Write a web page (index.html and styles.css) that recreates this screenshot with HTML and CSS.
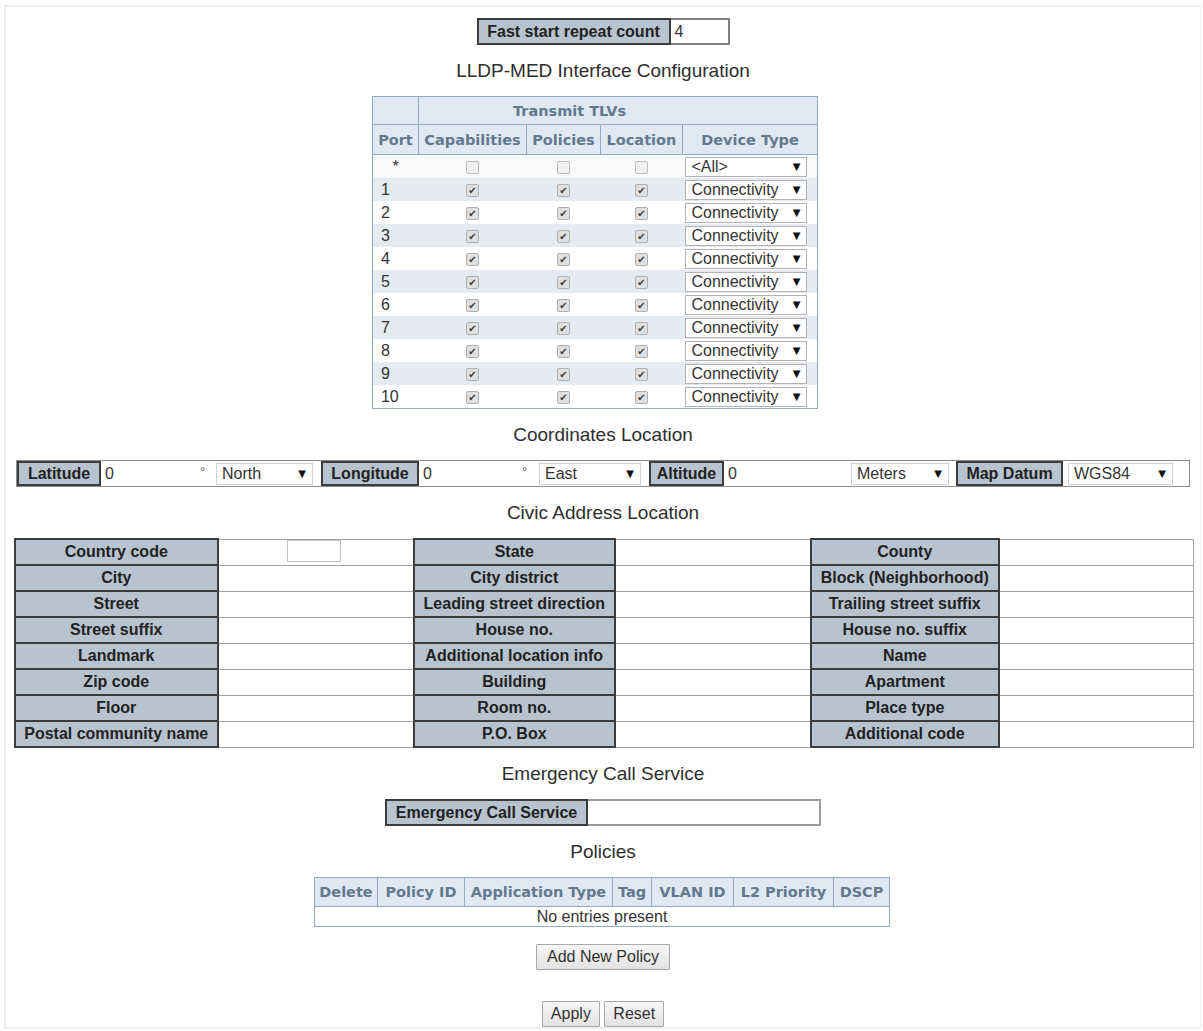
FILE: index.html
```html
<!DOCTYPE html>
<html lang="en">
<head>
    <meta charset="UTF-8">
    <title>LLDP-MED Configuration</title>
    <link rel="stylesheet" href="styles.css">
</head>
<body>
<div class="page">

    <table class="pair fast">
        <tr>
            <td class="lbl">Fast start repeat count</td>
            <td class="val"><span class="txt">4</span></td>
        </tr>
    </table>

    <h2 class="title">LLDP-MED Interface Configuration</h2>

    <table class="grid med">
        <colgroup>
            <col style="width:46px"><col style="width:108px"><col style="width:74px"><col style="width:82px"><col style="width:135px">
        </colgroup>
        <tr class="h1">
            <th></th>
            <th colspan="4" class="tlv">Transmit TLVs</th>
        </tr>
        <tr class="h2">
            <th>Port</th>
            <th>Capabilities</th>
            <th>Policies</th>
            <th>Location</th>
            <th>Device Type</th>
        </tr>
        <tr class="all">
            <td class="port c">*</td>
            <td class="c"><span class="cb"></span></td>
            <td class="c"><span class="cb"></span></td>
            <td class="c"><span class="cb"></span></td>
            <td><span class="sel">&lt;All&gt;<i>▼</i></span></td>
        </tr>
    </table>

    <h2 class="title">Coordinates Location</h2>

    <div class="coord">
        <div class="clbl w84">Latitude</div>
        <div class="cin w95">0</div>
        <div class="deg w20">°</div>
        <div class="sel csel w97 gap">North<i>▼</i></div>
        <div class="clbl w98">Longitude</div>
        <div class="cin w99">0</div>
        <div class="deg w21">°</div>
        <div class="sel csel w102 gap">East<i>▼</i></div>
        <div class="clbl w75">Altitude</div>
        <div class="cin w127">0</div>
        <div class="sel csel w98 gap7">Meters<i>▼</i></div>
        <div class="clbl w107 gap">Map Datum</div>
        <div class="sel csel w105 gap5">WGS84<i>▼</i></div>
    </div>

    <h2 class="title">Civic Address Location</h2>

    <table class="civic">
        <colgroup>
            <col style="width:203px"><col style="width:196px"><col style="width:201px"><col style="width:196px"><col style="width:188px"><col style="width:195px">
        </colgroup>
        <tr>
            <td class="lbl">Country code</td>
            <td class="val"><span class="cc"></span></td>
            <td class="lbl">State</td><td class="val"></td>
            <td class="lbl">County</td><td class="val"></td>
        </tr>
        <tr>
            <td class="lbl">City</td><td class="val"></td>
            <td class="lbl">City district</td><td class="val"></td>
            <td class="lbl">Block (Neighborhood)</td><td class="val"></td>
        </tr>
        <tr>
            <td class="lbl">Street</td><td class="val"></td>
            <td class="lbl">Leading street direction</td><td class="val"></td>
            <td class="lbl">Trailing street suffix</td><td class="val"></td>
        </tr>
        <tr>
            <td class="lbl">Street suffix</td><td class="val"></td>
            <td class="lbl">House no.</td><td class="val"></td>
            <td class="lbl">House no. suffix</td><td class="val"></td>
        </tr>
        <tr>
            <td class="lbl">Landmark</td><td class="val"></td>
            <td class="lbl">Additional location info</td><td class="val"></td>
            <td class="lbl">Name</td><td class="val"></td>
        </tr>
        <tr>
            <td class="lbl">Zip code</td><td class="val"></td>
            <td class="lbl">Building</td><td class="val"></td>
            <td class="lbl">Apartment</td><td class="val"></td>
        </tr>
        <tr>
            <td class="lbl">Floor</td><td class="val"></td>
            <td class="lbl">Room no.</td><td class="val"></td>
            <td class="lbl">Place type</td><td class="val"></td>
        </tr>
        <tr>
            <td class="lbl">Postal community name</td><td class="val"></td>
            <td class="lbl">P.O. Box</td><td class="val"></td>
            <td class="lbl">Additional code</td><td class="val"></td>
        </tr>
    </table>

    <h2 class="title">Emergency Call Service</h2>

    <table class="pair ecs">
        <tr>
            <td class="lbl">Emergency Call Service</td>
            <td class="val"></td>
        </tr>
    </table>

    <h2 class="title">Policies</h2>

    <table class="grid pol">
        <colgroup>
            <col style="width:63px"><col style="width:87px"><col style="width:148px"><col style="width:39px"><col style="width:82px"><col style="width:100px"><col style="width:56px">
        </colgroup>
        <tr class="h2">
            <th>Delete</th>
            <th>Policy ID</th>
            <th>Application Type</th>
            <th>Tag</th>
            <th>VLAN ID</th>
            <th>L2 Priority</th>
            <th>DSCP</th>
        </tr>
        <tr class="empty">
            <td colspan="7">No entries present</td>
        </tr>
    </table>

    <div class="buttons first">
        <button class="btn">Add New Policy</button>
    </div>

    <div class="buttons last">
        <button class="btn">Apply</button>
        <button class="btn">Reset</button>
    </div>

</div>

<script>
    // ports 1..10, all TLVs enabled, device type Connectivity
    const med = document.querySelector(".med tbody");
    for (let p = 1; p <= 10; p++) {
        const tr = document.createElement("tr");
        tr.className = p % 2 ? "odd" : "even";
        tr.innerHTML =
            '<td class="port">' + p + '</td>' +
            '<td class="c"><span class="cb on"></span></td>' +
            '<td class="c"><span class="cb on"></span></td>' +
            '<td class="c"><span class="cb on"></span></td>' +
            '<td><span class="sel">Connectivity<i>▼</i></span></td>';
        med.appendChild(tr);
    }
</script>
</body>
</html>
```

FILE: styles.css
```css
body {
    margin: 0;
    font-family: "Liberation Sans", Arial, sans-serif;
    font-size: 16px;
    color: #333;
    background-color: #fff;
}

.page {
    margin: 5px 2px 0 4px;
    height: 1024px;
    box-sizing: border-box;
    border: 2px solid #f0f0f0;
    border-right-width: 1px;
    padding-top: 11px;
}

.title {
    font-size: 19px;
    font-weight: normal;
    line-height: 22px;
    text-align: center;
    color: #2e2e2e;
    margin: 15px 0 14px;
}

table {
    border-collapse: collapse;
    margin: 0 auto;
}

/* grey label / white value pairs */
.lbl {
    background-color: #b7c3cf;
    border: 2px solid #3c3c3c;
    font-weight: bold;
    color: #222;
    text-align: center;
    white-space: nowrap;
    padding: 0 6px;
}

.val {
    background-color: #fff;
    border: 1px solid #9a9a9a;
    padding: 0;
}

.txt {
    padding-left: 4px;
}

.fast td {
    height: 23px;
}

.fast .lbl {
    width: 178px;
}

.fast .val {
    width: 57px;
    border: 2px solid #808080;
}

.ecs td {
    height: 23px;
}

.ecs .lbl {
    width: 187px;
}

.ecs .val {
    width: 231px;
    border: 2px solid #9a9a9a;
}

/* blue header tables */
.grid {
    table-layout: fixed;
    border: 1px solid #93aac1;
}

.grid th {
    background-color: #dee9f4;
    border: 1px solid #93aac1;
    font-family: "DejaVu Sans", Verdana, sans-serif;
    font-size: 14.5px;
    font-weight: bold;
    color: #63798e;
    white-space: nowrap;
    padding: 0;
}

.med {
    width: 445px;
    transform: translateX(-8px);
}

.med .h1 th {
    height: 27px;
}

.med .h2 th {
    height: 29px;
}

.med .tlv {
    text-align: left;
    padding-left: 94px;
}

.med td {
    height: 23px;
    padding: 0;
}

.med .all td {
    background-color: #f7f9fb;
}

.med .odd td {
    background-color: #e5ebf1;
}

.med .even td {
    background-color: #fff;
}

.med td:last-child {
    padding-left: 3px;
}

.port {
    padding-left: 8px !important;
}

.port.c {
    padding-left: 0 !important;
}

.c {
    text-align: center;
}

.cb {
    display: inline-block;
    width: 11px;
    height: 11px;
    border: 1px solid #bcbcbc;
    border-radius: 2px;
    background-color: #f1f1f1;
    vertical-align: middle;
    font-family: "DejaVu Sans", sans-serif;
    font-size: 10px;
    line-height: 11px;
    text-align: center;
    color: #3c3c3c;
}

.cb.on {
    background-color: #e0e0e0;
    border-color: #b0b0b0;
}

.cb.on::before {
    content: "✔";
}

.sel {
    display: flex;
    justify-content: space-between;
    align-items: center;
    box-sizing: border-box;
    width: 122px;
    height: 20px;
    padding: 0 6px 0 5px;
    background-color: #fff;
    border: 1px solid #b3b3b3;
    color: #333;
    line-height: 18px;
}

.sel i {
    font-style: normal;
    font-family: "DejaVu Sans", sans-serif;
    font-size: 10px;
    color: #111;
}

/* coordinates row */
.coord {
    display: flex;
    align-items: stretch;
    width: 1174px;
    height: 27px;
    box-sizing: border-box;
    margin: 0 auto;
    border: 1px solid #8c8c8c;
    background-color: #fff;
}

.clbl {
    box-sizing: border-box;
    background-color: #b7c3cf;
    border: 2px solid #3c3c3c;
    font-weight: bold;
    color: #222;
    text-align: center;
    line-height: 21px;
    white-space: nowrap;
}

.cin {
    box-sizing: border-box;
    padding-left: 4px;
    line-height: 25px;
}

.deg {
    box-sizing: border-box;
    padding-left: 4px;
    font-size: 13px;
    line-height: 22px;
    color: #555;
}

.csel {
    height: 22px;
    align-self: center;
    border-color: #d0d0d0;
}

.gap { margin-right: 8px; }
.gap7 { margin-right: 7px; }
.gap5 { margin-right: 5px; }

.w20 { width: 20px; }
.w21 { width: 21px; }
.w75 { width: 75px; }
.w84 { width: 84px; }
.w95 { width: 95px; }
.w97 { width: 97px; }
.w98 { width: 98px; }
.w99 { width: 99px; }
.w102 { width: 102px; }
.w105 { width: 105px; }
.w107 { width: 107px; }
.w127 { width: 127px; }

.clbl.gap { margin-right: 5px; }
.clbl.w107 { margin-right: 0; }
.w105 { margin-left: 5px; }

/* civic address grid */
.civic {
    table-layout: fixed;
    width: 1179px;
    transform: translateX(1px);
}

.civic td {
    height: 24px;
}

.civic .lbl {
    padding: 0 2px;
}

.civic .val {
    border-color: #a3a3a3;
    padding-left: 68px;
}

.civic .val .cc {
    display: block;
    width: 52px;
    height: 20px;
    border: 1px solid #c2c2c2;
}

.civic tr:first-child .val {
    vertical-align: top;
}

/* policies */
.pol {
    width: 575px;
    transform: translateX(-1px);
}

.pol .h2 th {
    height: 28px;
}

.pol .empty td {
    height: 19px;
    padding: 0;
    text-align: center;
    line-height: 19px;
    background-color: #fff;
}

.buttons {
    text-align: center;
}

.buttons.first {
    margin-top: 17px;
}

.buttons.last {
    margin-top: 31px;
}

.btn {
    font-family: "Liberation Sans", Arial, sans-serif;
    font-size: 16px;
    color: #333;
    height: 26px;
    padding: 0 8px;
    border: 1px solid #a9a9a9;
    border-radius: 1px;
    background: linear-gradient(#f7f7f7, #e2e2e2);
}

.buttons.first .btn {
    padding: 0 10px;
}
```
